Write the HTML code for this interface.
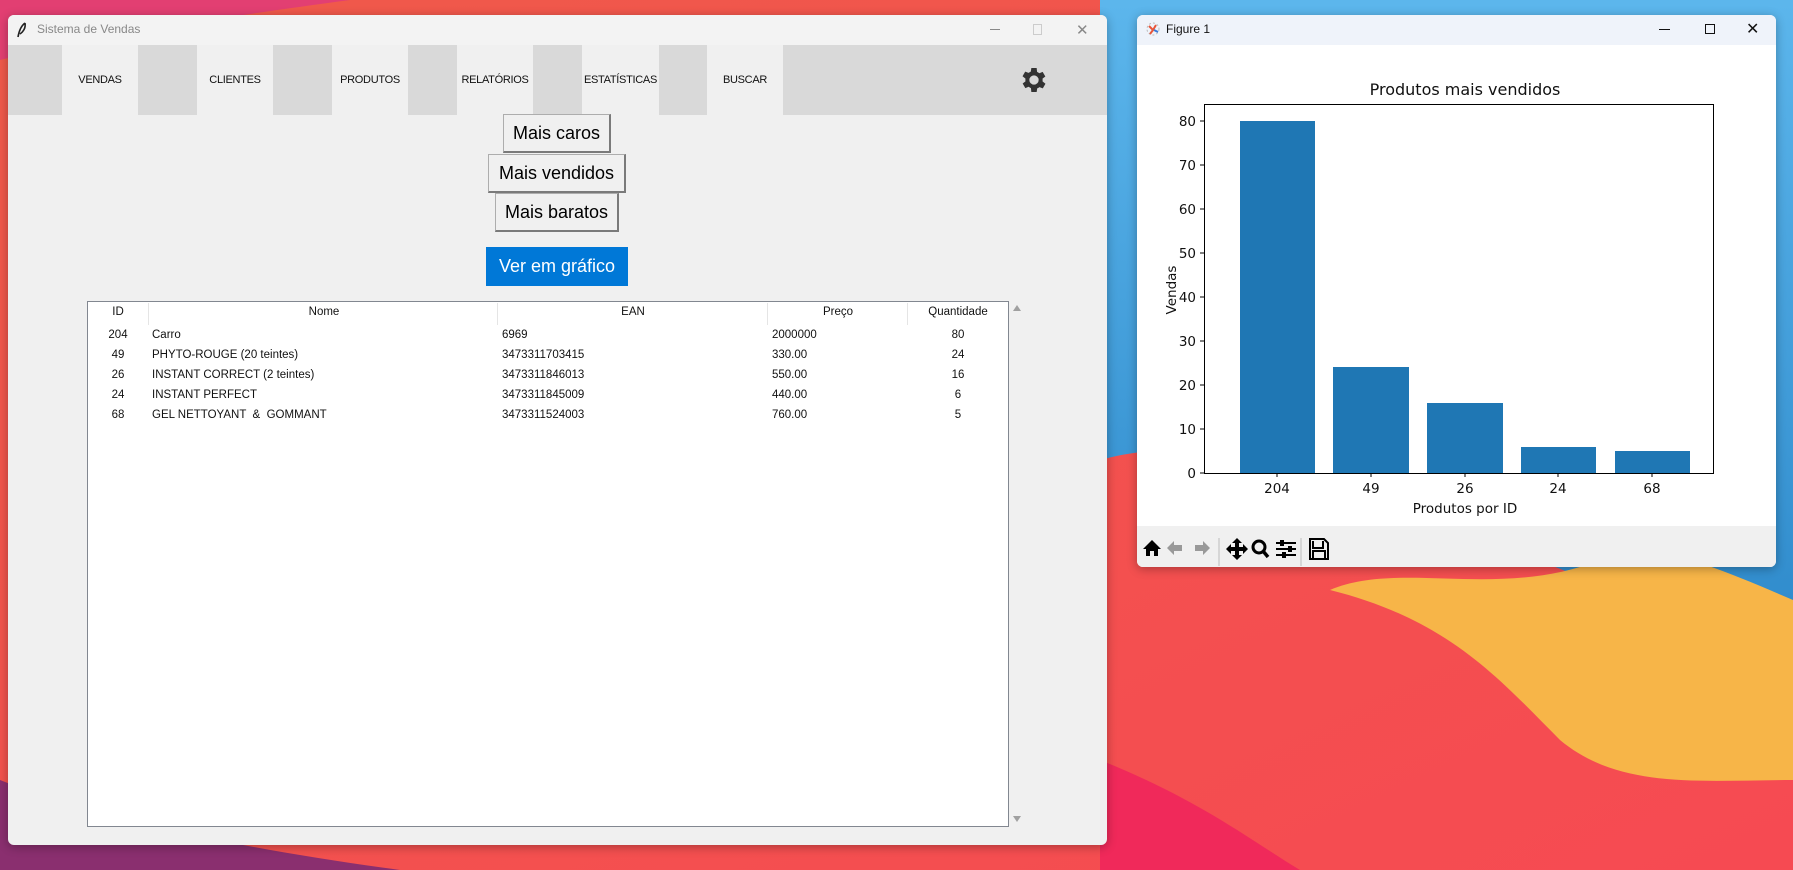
<!DOCTYPE html>
<html><head><meta charset="utf-8"><style>
*{margin:0;padding:0;box-sizing:border-box}
body{width:1793px;height:870px;overflow:hidden;position:relative;font-family:"Liberation Sans",sans-serif;background:#e8455a}
.abs{position:absolute}
.nav div{position:absolute;top:0;height:70px;display:flex;align-items:center;justify-content:center;font-size:11px;color:#111;letter-spacing:-0.3px}
.btn{position:absolute;background:#f0f0f0;border:1px solid #adadad;border-right:2px solid #7a7a7a;border-bottom:2px solid #7a7a7a;font-size:18px;display:flex;align-items:center;justify-content:center;color:#000}
.row{position:absolute;left:0;height:20px;font-size:11.5px;color:#111;width:100%}
.row span{position:absolute;top:3px}
</style></head><body>
<svg class="abs" style="left:0;top:0" width="1793" height="870">
<defs>
<linearGradient id="g1" x1="0" y1="0" x2="0" y2="1"><stop offset="0" stop-color="#5cb6ec"/><stop offset="1" stop-color="#2a86c8"/></linearGradient>
<linearGradient id="g2" x1="0" y1="0" x2="1" y2="1"><stop offset="0" stop-color="#ef5a4a"/><stop offset="1" stop-color="#f64a52"/></linearGradient>
</defs>
<rect width="1793" height="870" fill="url(#g2)"/>
<path d="M0 0H1793V700C1700 650 1600 560 1450 540C1300 520 1250 420 1100 460V0Z" fill="url(#g1)"/>
<path d="M0 0H350C200 20 80 40 0 60Z" fill="#e23f72"/>
<path d="M1330 590C1450 620 1500 680 1560 740C1620 790 1700 780 1793 780V600C1700 560 1650 540 1600 560C1500 600 1400 560 1330 590Z" fill="#f7b548"/>
<path d="M1100 760C1200 800 1250 840 1300 870H1100Z" fill="#f0295a"/>
<path d="M0 780V870H400C250 850 100 820 0 780Z" fill="#8a2f6f"/>
</svg>

<div class="abs" style="left:8px;top:15px;width:1099px;height:830px;background:#f0f0f0;border-radius:6px;overflow:hidden;box-shadow:0 2px 10px rgba(0,0,0,.3)">
 <div class="abs" style="left:0;top:0;width:100%;height:30px;background:#f3f3f3"></div>
 <svg class="abs" style="left:9px;top:7px" width="10" height="16"><path d="M8 1C4 4 2 9 1 15M8 1C9 6 6 10 3 12" stroke="#222" stroke-width="1.6" fill="none"/></svg>
 <div class="abs" style="left:29px;top:7px;font-size:12px;color:#888">Sistema de Vendas</div>
 <div class="abs" style="left:982px;top:14px;width:10px;height:1px;background:#888"></div>
 <div class="abs" style="left:1025px;top:9px;width:9px;height:11px;border:1px solid #ccc"></div>
 <div class="abs" style="left:1068px;top:6px;font-size:15px;color:#888">✕</div>
 <div class="abs nav" style="left:0;top:30px;width:100%;height:70px;background:#d9d9d9">
  <div style="left:54px;width:76px;background:#f0f0f0">VENDAS</div>
  <div style="left:189px;width:76px;background:#f0f0f0">CLIENTES</div>
  <div style="left:324px;width:76px;background:#f0f0f0">PRODUTOS</div>
  <div style="left:449px;width:76px;background:#f0f0f0">RELATÓRIOS</div>
  <div style="left:574px;width:77px;background:#f0f0f0">ESTATÍSTICAS</div>
  <div style="left:699px;width:76px;background:#f0f0f0">BUSCAR</div>
 </div>
 <svg class="abs" style="left:1010px;top:49px" width="32" height="32" viewBox="0 0 24 24"><path fill="#333" d="M19.4 13a7.5 7.5 0 000-2l2.1-1.6-2-3.5-2.5 1a7.4 7.4 0 00-1.7-1L15 3h-4l-.4 2.7a7.4 7.4 0 00-1.7 1l-2.5-1-2 3.5L6.6 11a7.5 7.5 0 000 2l-2.1 1.6 2 3.5 2.5-1a7.4 7.4 0 001.7 1L11 21h4l.4-2.7a7.4 7.4 0 001.7-1l2.5 1 2-3.5zM13 15.5a3.5 3.5 0 110-7 3.5 3.5 0 010 7z" transform="translate(-1 0)"/></svg>
 <div class="btn" style="left:495px;top:99px;width:108px;height:39px">Mais caros</div>
 <div class="btn" style="left:480px;top:139px;width:138px;height:39px">Mais vendidos</div>
 <div class="btn" style="left:487px;top:178px;width:124px;height:39px">Mais baratos</div>
 <div class="abs" style="left:478px;top:232px;width:142px;height:39px;background:#0078d7;color:#fff;font-size:18px;display:flex;align-items:center;justify-content:center">Ver em gráfico</div>
 <div class="abs" style="left:79px;top:286px;width:922px;height:526px;background:#fff;border:1px solid #828790">
  <div class="row" style="top:1px;height:22px">
   <span style="left:0;width:60px;text-align:center">ID</span>
   <span style="left:61px;width:350px;text-align:center">Nome</span>
   <span style="left:410px;width:270px;text-align:center">EAN</span>
   <span style="left:680px;width:140px;text-align:center">Preço</span>
   <span style="left:820px;width:100px;text-align:center">Quantidade</span>
  </div>
  <div class="abs" style="left:60px;top:1px;width:1px;height:22px;background:#e5e5e5"></div>
  <div class="abs" style="left:409px;top:1px;width:1px;height:22px;background:#e5e5e5"></div>
  <div class="abs" style="left:679px;top:1px;width:1px;height:22px;background:#e5e5e5"></div>
  <div class="abs" style="left:819px;top:1px;width:1px;height:22px;background:#e5e5e5"></div>
  <div class="row" style="top:24px"><span style="left:0;width:60px;text-align:center">204</span><span style="left:64px">Carro</span><span style="left:414px">6969</span><span style="left:684px">2000000</span><span style="left:820px;width:100px;text-align:center">80</span></div>
  <div class="row" style="top:44px"><span style="left:0;width:60px;text-align:center">49</span><span style="left:64px">PHYTO-ROUGE (20 teintes)</span><span style="left:414px">3473311703415</span><span style="left:684px">330.00</span><span style="left:820px;width:100px;text-align:center">24</span></div>
  <div class="row" style="top:64px"><span style="left:0;width:60px;text-align:center">26</span><span style="left:64px">INSTANT CORRECT (2 teintes)</span><span style="left:414px">3473311846013</span><span style="left:684px">550.00</span><span style="left:820px;width:100px;text-align:center">16</span></div>
  <div class="row" style="top:84px"><span style="left:0;width:60px;text-align:center">24</span><span style="left:64px">INSTANT PERFECT</span><span style="left:414px">3473311845009</span><span style="left:684px">440.00</span><span style="left:820px;width:100px;text-align:center">6</span></div>
  <div class="row" style="top:104px"><span style="left:0;width:60px;text-align:center">68</span><span style="left:64px">GEL NETTOYANT &nbsp;&amp;&nbsp; GOMMANT</span><span style="left:414px">3473311524003</span><span style="left:684px">760.00</span><span style="left:820px;width:100px;text-align:center">5</span></div>
 </div>
 <div class="abs" style="left:1005px;top:290px;width:0;height:0;border-left:4px solid transparent;border-right:4px solid transparent;border-bottom:6px solid #a0a0a0"></div>
 <div class="abs" style="left:1005px;top:801px;width:0;height:0;border-left:4px solid transparent;border-right:4px solid transparent;border-top:6px solid #a0a0a0"></div>
</div>

<div class="abs" style="left:1137px;top:15px;width:639px;height:552px;background:#fff;border-radius:6px;overflow:hidden;box-shadow:0 2px 10px rgba(0,0,0,.3)">
 <div class="abs" style="left:0;top:0;width:100%;height:30px;background:#eff3fa"></div>
 <svg class="abs" style="left:8px;top:6px" width="16" height="16"><circle cx="8" cy="8" r="6" fill="none" stroke="#bbb" stroke-dasharray="2 2"/><path d="M4 5l4 4 3-5M8 9l-3 4" stroke="#e8563a" stroke-width="2" fill="none"/><path d="M9 9l4 2" stroke="#3a7ad8" stroke-width="2"/></svg>
 <div class="abs" style="left:29px;top:7px;font-size:12px;color:#111">Figure 1</div>
 <div class="abs" style="left:522px;top:14px;width:11px;height:1px;background:#111"></div>
 <div class="abs" style="left:568px;top:9px;width:10px;height:10px;border:1px solid #111"></div>
 <div class="abs" style="left:609px;top:4px;font-size:16px;color:#111">✕</div>
 <svg class="abs" style="left:0;top:30px" width="639" height="481" font-family="DejaVu Sans, sans-serif">
  <g transform="translate(-1137,-45)">
  <text x="1465" y="95" text-anchor="middle" font-size="16" fill="#111">Produtos mais vendidos</text>
  <g fill="#1f77b4">
   <rect x="1240" y="121" width="75" height="352"/>
   <rect x="1333" y="367" width="76" height="106"/>
   <rect x="1427" y="403" width="76" height="70"/>
   <rect x="1521" y="447" width="75" height="26"/>
   <rect x="1615" y="451" width="75" height="22"/>
  </g>
  <rect x="1204.5" y="104.5" width="509" height="369" fill="none" stroke="#000" stroke-width="1"/>
  <g font-size="13.5" fill="#111" text-anchor="end">
   <text x="1196" y="478">0</text><text x="1196" y="434">10</text><text x="1196" y="390">20</text><text x="1196" y="346">30</text><text x="1196" y="302">40</text><text x="1196" y="258">50</text><text x="1196" y="214">60</text><text x="1196" y="170">70</text><text x="1196" y="126">80</text>
  </g>
  <g stroke="#000"><path d="M1200 473h4M1200 429h4M1200 385h4M1200 341h4M1200 297h4M1200 253h4M1200 209h4M1200 165h4M1200 121h4M1277 473v4M1371 473v4M1465 473v4M1558 473v4M1652 473v4"/></g>
  <g font-size="13.5" fill="#111" text-anchor="middle">
   <text x="1277" y="493">204</text><text x="1371" y="493">49</text><text x="1465" y="493">26</text><text x="1558" y="493">24</text><text x="1652" y="493">68</text>
   <text x="1465" y="513">Produtos por ID</text>
   <text x="1176" y="290" transform="rotate(-90 1176 290)">Vendas</text>
  </g>
  </g>
 </svg>
 <div class="abs" style="left:0;top:511px;width:100%;height:41px;background:#f0f0f0"></div>
 <svg class="abs" style="left:0;top:511px" width="220" height="41">
  <path d="M6 23L15 14L24 23H21V30H17V25H13V30H9V23Z" fill="#000"/>
  <path d="M30 22L37 15V19H45V25H37V29Z" fill="#999"/>
  <path d="M73 22L66 15V19H58V25H66V29Z" fill="#999"/>
  <path d="M82 12v28" stroke="#bbb"/>
  <path d="M100 12L105 17H102V21H106V18L111 23L106 28V25H102V29H105L100 34L95 29H98V25H94V28L89 23L94 18V21H98V17H95Z" fill="#000"/>
  <circle cx="122" cy="21" r="6" fill="none" stroke="#000" stroke-width="3"/><path d="M126 25l5 6" stroke="#000" stroke-width="3.5"/>
  <path d="M139 17h20M139 23h20M139 29h20" stroke="#000" stroke-width="2"/><rect x="143" y="14" width="4" height="6"/><rect x="151" y="20" width="4" height="6"/><rect x="145" y="26" width="4" height="6"/>
  <path d="M164 12v28" stroke="#bbb"/>
  <path d="M173 13h14l4 4v16h-18Z M176 15v7h10v-7 M176 33v-8h12v8" fill="none" stroke="#000" stroke-width="2"/>
 </svg>
</div>
</body></html>
